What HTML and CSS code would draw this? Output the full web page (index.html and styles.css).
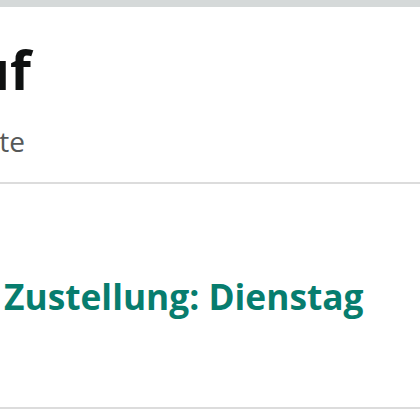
FILE: index.html
```html
<!DOCTYPE html>
<html lang="de">
<head>
<meta charset="utf-8">
<link rel="stylesheet" href="styles.css">
</head>
<body>
<div class="topbar"></div>
<section class="head">
  <h1 class="title">Kauf</h1>
  <p class="sub">Seite</p>
</section>
<section class="delivery">
  <p class="date">Zustellung: Dienstag</p>
</section>
<section class="rest"></section>
</body>
</html>
```
FILE: styles.css
```css
html, body {
  margin: 0;
  padding: 0;
  background: #fff;
  overflow: hidden;
  font-family: "Open Sans", Lato, sans-serif;
}
.topbar {
  height: 7px;
  background: #d5d9d9;
}
.head {
  height: 175px;
  border-bottom: 2px solid #dcdcdc;
  display: flex;
  flex-direction: column;
  overflow: hidden;
}
.title {
  margin: 32px 0 0 -94px;
  font-size: 54px;
  line-height: 60px;
  font-weight: 700;
  color: #0f1111;
  white-space: nowrap;
}
.sub {
  margin: 26px 0 0 -39px;
  font-size: 28px;
  line-height: 33px;
  color: #565959;
  white-space: nowrap;
}
.delivery {
  height: 223px;
  border-bottom: 2px solid #dcdcdc;
  display: flex;
  align-items: center;
  padding-left: 4px;
}
.date {
  margin: 0;
  font-size: 35.3px;
  line-height: 44px;
  font-weight: 700;
  color: #077d6e;
  white-space: nowrap;
}
```
